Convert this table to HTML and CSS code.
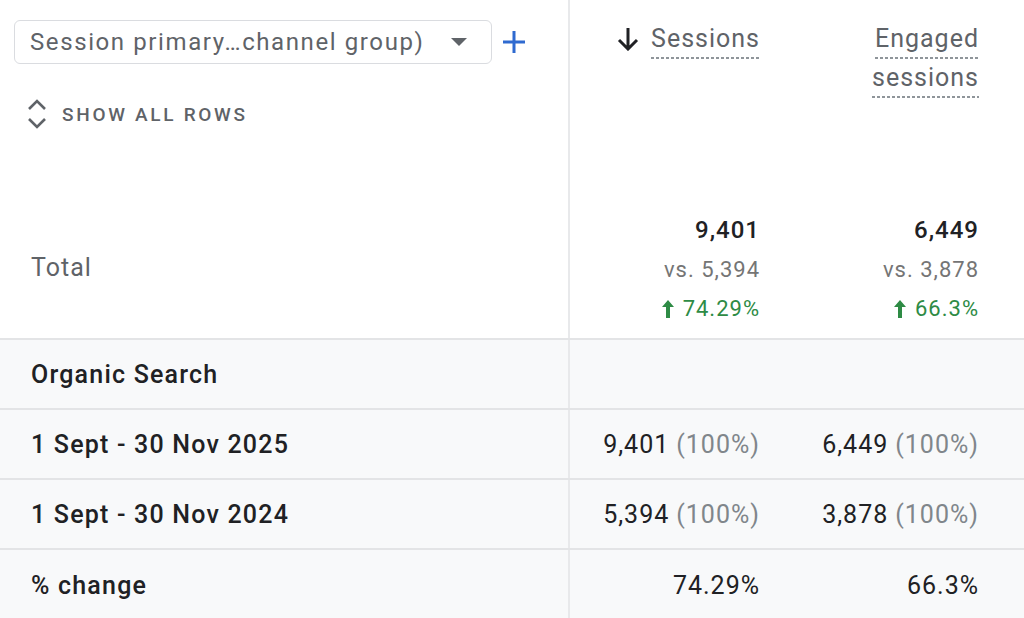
FILE: index.html
```html
<!DOCTYPE html>
<html>
<head>
<meta charset="utf-8">
<link rel="stylesheet" href="styles.css">
</head>
<body>
<div class="table">
  <div class="top">
    <div class="cell-left top-left">
      <div class="picker">
        <div class="select">
          <span class="select-text">Session primary…channel group)</span>
          <svg class="caret" width="16" height="8" viewBox="0 0 16 8"><path d="M0 0h16L8 8z" fill="#5f6368"/></svg>
        </div>
        <svg class="plus" width="22" height="22" viewBox="0 0 22 22"><path d="M11 0v22M0 11h22" stroke="#2f6ad0" stroke-width="3"/></svg>
      </div>
      <div class="show-all">
        <svg width="20" height="30" viewBox="0 0 20 30"><path d="M2 10l8-8 8 8M2 20l8 8 8-8" fill="none" stroke="#5f6368" stroke-width="2.6"/></svg>
        <span>SHOW ALL ROWS</span>
      </div>
      <div class="total-label">Total</div>
    </div>
    <div class="metric top-metric">
      <div class="head">
        <svg class="sort" width="22" height="23" viewBox="0 0 22 23"><path d="M11 0v20M2 12l9 9 9-9" fill="none" stroke="#202124" stroke-width="3"/></svg>
        <span class="label">Sessions</span>
      </div>
      <div class="totals">
        <div class="big">9,401</div>
        <div class="vs">vs. 5,394</div>
        <div class="up"><svg width="12" height="18" viewBox="0 0 12 18"><path d="M6 0L0 7h4v11h4V7h4z" fill="#2e8b45"/></svg>74.29%</div>
      </div>
    </div>
    <div class="metric top-metric">
      <div class="head">
        <span class="label">Engaged</span>
        <span class="label">sessions</span>
      </div>
      <div class="totals">
        <div class="big">6,449</div>
        <div class="vs">vs. 3,878</div>
        <div class="up"><svg width="12" height="18" viewBox="0 0 12 18"><path d="M6 0L0 7h4v11h4V7h4z" fill="#2e8b45"/></svg>66.3%</div>
      </div>
    </div>
  </div>

  <div class="row">
    <div class="cell-left name">Organic Search</div>
    <div class="metric"></div>
    <div class="metric"></div>
  </div>
  <div class="row">
    <div class="cell-left name">1 Sept - 30 Nov 2025</div>
    <div class="metric val">9,401 <span class="pct">(100%)</span></div>
    <div class="metric val">6,449 <span class="pct">(100%)</span></div>
  </div>
  <div class="row">
    <div class="cell-left name">1 Sept - 30 Nov 2024</div>
    <div class="metric val">5,394 <span class="pct">(100%)</span></div>
    <div class="metric val">3,878 <span class="pct">(100%)</span></div>
  </div>
  <div class="row last">
    <div class="cell-left name">% change</div>
    <div class="metric val">74.29%</div>
    <div class="metric val">66.3%</div>
  </div>
</div>
</body>
</html>
```
FILE: styles.css
```css
* { box-sizing: border-box; }
html, body { margin: 0; padding: 0; background: #fff; }
body {
  font-family: Roboto, "Noto Sans", sans-serif;
  color: #202124;
  letter-spacing: 1px;
}

.table { width: 1024px; height: 618px; overflow: hidden; }

.top {
  display: flex;
  height: 340px;
  border-bottom: 2px solid #e3e4e6;
}

.cell-left {
  width: 570px;
  flex: none;
  border-right: 2px solid #e8e9eb;
}

.top-left {
  display: flex;
  flex-direction: column;
  padding: 20px 0 0 14px;
}

.picker { display: flex; align-items: center; gap: 11px; }
.select {
  width: 478px;
  height: 44px;
  border: 1.5px solid #dadce0;
  border-radius: 6px;
  display: flex;
  align-items: center;
  justify-content: space-between;
  padding: 0 24px 0 15px;
  font-size: 24px;
  color: #5f6368;
}
.select-text { letter-spacing: 1.6px; }

.show-all {
  display: flex;
  align-items: center;
  gap: 15px;
  margin: 35px 0 0 13px;
  font-size: 19px;
  font-weight: 500;
  letter-spacing: 2.7px;
  color: #5f6368;
}

.total-label {
  margin: 124px 0 0 17px;
  font-size: 25px;
  color: #5f6368;
}

.metric {
  flex: none;
  display: flex;
  justify-content: flex-end;
  align-items: center;
  padding-right: 45px;
  font-size: 25px;
}
.metric:nth-child(2) { width: 235px; }
.metric:nth-child(3) { width: 219px; }

.top-metric {
  flex-direction: column;
  align-items: flex-end;
  justify-content: space-between;
  padding-top: 20px;
  padding-bottom: 10px;
}

.head {
  display: flex;
  flex-direction: column;
  align-items: flex-end;
  position: relative;
}
.head .label {
  color: #5f6368;
  font-size: 25px;
  line-height: 37px;
  padding-bottom: 2px;
  background-image: repeating-linear-gradient(to right, #8f959a 0 3px, transparent 3px 5px);
  background-size: 100% 2px;
  background-repeat: no-repeat;
  background-position: left bottom;
}
.head .sort { position: absolute; left: -34px; top: 8px; }

.totals { display: flex; flex-direction: column; align-items: flex-end; }
.totals > div { line-height: 39px; font-size: 22px; }
.totals .big { font-size: 24px; font-weight: 500; color: #202124; }
.totals .vs { color: #757575; }
.totals .up { color: #2e8b45; display: flex; align-items: center; gap: 9px; }

.row {
  display: flex;
  height: 70px;
  background: #f8f9fa;
  border-bottom: 2px solid #e3e4e6;
}
.row.last { border-bottom: none; }
.row .cell-left {
  display: flex;
  align-items: center;
  padding-left: 31px;
  font-size: 25px;
  font-weight: 500;
  letter-spacing: 1.2px;
}
.val { color: #202124; }
.val .pct { color: #80868b; margin-left: 7px; }
```
